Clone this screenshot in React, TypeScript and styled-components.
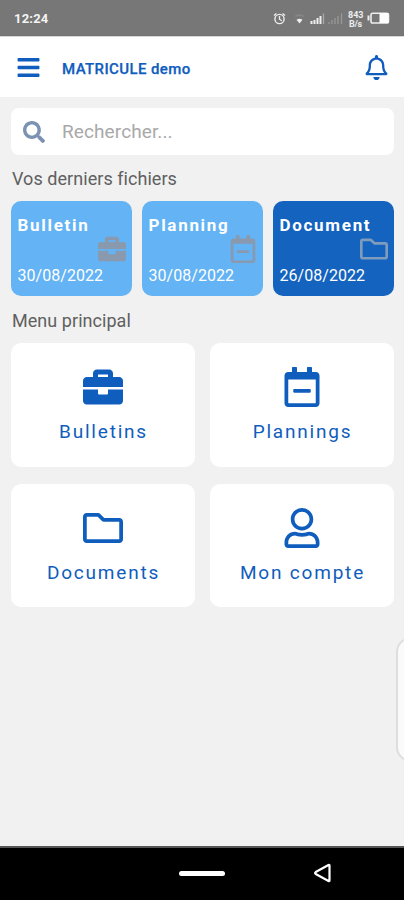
import React from 'react';
import styled, { createGlobalStyle } from 'styled-components';
import {
  FaBars, FaBriefcase, FaRegBell, FaRegCalendarMinus, FaRegFolder, FaRegUser, FaSearch,
} from 'react-icons/fa';
import type { IconType } from 'react-icons';

const blue = '#0f5dbd';

const GlobalStyle = createGlobalStyle`
  * { box-sizing: border-box; }
  body { margin: 0; background: #f1f1f1; font-family: Roboto, "Liberation Sans", sans-serif; }
  svg { display: block; flex: none; }
`;

const Screen = styled.div`
  position: relative;
  display: flex;
  flex-direction: column;
  width: 404px;
  height: 900px;
  overflow: hidden;
  background: #f1f1f1;
`;

const StatusBar = styled.div`
  display: flex;
  align-items: center;
  justify-content: space-between;
  height: 36px;
  padding: 1px 13px 0 14px;
  background: #777;
  border-bottom: 1px solid #727272;
  color: #f4f4f4;
`;

const Clock = styled.span`
  font-size: 13px;
  font-weight: 700;
  letter-spacing: 0.2px;
`;

const Header = styled.header`
  display: flex;
  align-items: center;
  height: 61px;
  padding: 0 15px 0 16px;
  border-top: 1px solid #d9d9d9;
  background: #fff;
  color: ${blue};
`;

const Title = styled.h1`
  flex: 1;
  margin: 4px 0 0 21px;
  font-size: 15px;
  font-weight: 500;
  line-height: 20px;
  letter-spacing: 0.4px;
  -webkit-text-stroke: 0.25px currentColor;
`;

const Content = styled.main`
  flex: 1;
  padding: 11px 9px 0 11px;
`;

const SearchBox = styled.div`
  display: flex;
  align-items: center;
  gap: 17px;
  width: 383px;
  height: 47px;
  padding-left: 12px;
  border-radius: 8px;
  background: #fff;
  color: #7c92b3;
`;

const Placeholder = styled.span`
  font-size: 19px;
  line-height: 24px;
  letter-spacing: 0.1px;
  color: #a9a9a9;
`;

const SectionTitle = styled.h2<{ $height: number }>`
  display: flex;
  align-items: center;
  height: ${(p) => p.$height}px;
  margin: 0;
  padding-top: 1px;
  padding-left: 1px;
  font-size: 18px;
  font-weight: 400;
  letter-spacing: 0.05px;
  color: #606060;
`;

const FileRow = styled.div`
  display: grid;
  grid-template-columns: repeat(3, 121px);
  column-gap: 10px;
`;

const FileCard = styled.article<{ $dark?: boolean }>`
  display: flex;
  flex-direction: column;
  height: 95px;
  padding: 14px 6px 10px 6.5px;
  border-radius: 10px;
  background: ${(p) => (p.$dark ? '#1463bf' : '#64b3f4')};
  color: #fff;
`;

const FileName = styled.strong`
  font-size: 17px;
  font-weight: 700;
  line-height: 20px;
  letter-spacing: 1.7px;
`;

const FileIcon = styled.div<{ $dark?: boolean }>`
  align-self: flex-end;
  margin-bottom: auto;
  color: ${(p) => (p.$dark ? '#7f9cbd' : '#8999ae')};
`;

const FileDate = styled.time`
  font-size: 16px;
  line-height: 20px;
  letter-spacing: 0.05px;
`;

const MenuGrid = styled.div`
  display: grid;
  grid-template-columns: 184px 184px;
  grid-template-rows: 124px 123px;
  gap: 17px 15px;
`;

const MenuCard = styled.div`
  display: flex;
  flex-direction: column;
  align-items: center;
  padding-top: 24px;
  border-radius: 10px;
  background: #fff;
  color: ${blue};
`;

const MenuLabel = styled.span`
  margin-top: 13px;
  padding-left: 1px;
  font-size: 19px;
  line-height: 24px;
  letter-spacing: 1.8px;
`;

const EdgePanel = styled.div`
  position: absolute;
  right: -22px;
  top: 637px;
  width: 30px;
  height: 125px;
  border: 2px solid #dedede;
  border-radius: 18px;
  background: #fafafa;
`;

const NavBar = styled.nav`
  display: grid;
  grid-template-columns: 1fr 46px 1fr;
  align-items: center;
  height: 54px;
  padding-bottom: 2px;
  border-top: 2px solid #555;
  background: #000;
`;

const HomePill = styled.div`
  grid-column: 2;
  height: 5px;
  border-radius: 3px;
  background: #fff;
`;

const BackButton = styled.div`
  padding-left: 88px;
`;

const StatusIcons = () => (
  <svg width="120" height="24" viewBox="272 6 120 24" fill="none" stroke="#eee">
    <circle cx="280.5" cy="19" r="4.6" strokeWidth="1.4" />
    <path d="M280.500 16v3.200l2.300 1.500M275 15.500l2.400-2M286 15.500l-2.400-2" strokeWidth="1.3" />
    <path d="M296.200 16.400q4.300-2.500 8.600 0" stroke="#868686" strokeWidth="1.6" />
    <path d="M297.500 19.800q3-2.300 6 0l-3 3.700z" fill="#eee" stroke="none" />
    <path d="M312.500 24v-3M315.500 24v-4M318.500 24v-6M321.500 24v-8" strokeWidth="2" />
    <path d="M324.500 24V13.500" stroke="#aaa" strokeWidth="1.3" />
    <path d="M330 24v-2M333 24v-4M336 24v-6M339 24v-8M342.500 24V13.500" stroke="#999" strokeWidth="1.3" />
    <g fill="#eee" stroke="none" fontFamily="Roboto, sans-serif" fontSize="9" fontWeight="700">
      <text x="349" y="17.500" textLength="15.500">843</text>
      <text x="350" y="26.500" textLength="13">B/s</text>
    </g>
    <rect x="372" y="13.200" width="17.500" height="9.800" rx="1.800" strokeWidth="1.600" />
    <path d="M380.500 13h9v10h-9z" fill="#fff" stroke="none" />
    <path d="M369.500 15.500v5" strokeWidth="2" />
  </svg>
);

interface RecentFile { name: string; date: string; icon: IconType; dark?: boolean }

const files: RecentFile[] = [
  { name: 'Bulletin', date: '30/08/2022', icon: FaBriefcase },
  { name: 'Planning', date: '30/08/2022', icon: FaRegCalendarMinus },
  { name: 'Document', date: '26/08/2022', icon: FaRegFolder, dark: true },
];

const menu: { label: string; icon: IconType }[] = [
  { label: 'Bulletins', icon: FaBriefcase },
  { label: 'Plannings', icon: FaRegCalendarMinus },
  { label: 'Documents', icon: FaRegFolder },
  { label: 'Mon compte', icon: FaRegUser },
];

export default function App() {
  return (
    <Screen>
      <GlobalStyle />
      <StatusBar>
        <Clock>12:24</Clock>
        <StatusIcons />
      </StatusBar>
      <Header>
        <FaBars size={25} />
        <Title>MATRICULE demo</Title>
        <FaRegBell size={25} />
      </Header>
      <Content>
        <SearchBox>
          <FaSearch size={22} />
          <Placeholder>Rechercher...</Placeholder>
        </SearchBox>
        <SectionTitle $height={46}>Vos derniers fichiers</SectionTitle>
        <FileRow>
          {files.map(({ name, date, icon: Icon, dark }) => (
            <FileCard key={name} $dark={dark}>
              <FileName>{name}</FileName>
              <FileIcon $dark={dark}><Icon size={28} /></FileIcon>
              <FileDate>{date}</FileDate>
            </FileCard>
          ))}
        </FileRow>
        <SectionTitle $height={47}>Menu principal</SectionTitle>
        <MenuGrid>
          {menu.map(({ label, icon: Icon }) => (
            <MenuCard key={label}>
              <Icon size={40} />
              <MenuLabel>{label}</MenuLabel>
            </MenuCard>
          ))}
        </MenuGrid>
      </Content>
      <EdgePanel />
      <NavBar>
        <HomePill />
        <BackButton>
          <svg width="20" height="22" viewBox="0 0 20 22" fill="none" stroke="#fff" strokeWidth="2.2" strokeLinejoin="round">
            <path d="M16.500 3.500v15q0 1-1 .5L2.700 12q-1.300-1 0-2L15.500 3q1-.5 1 .5z" />
          </svg>
        </BackButton>
      </NavBar>
    </Screen>
  );
}
